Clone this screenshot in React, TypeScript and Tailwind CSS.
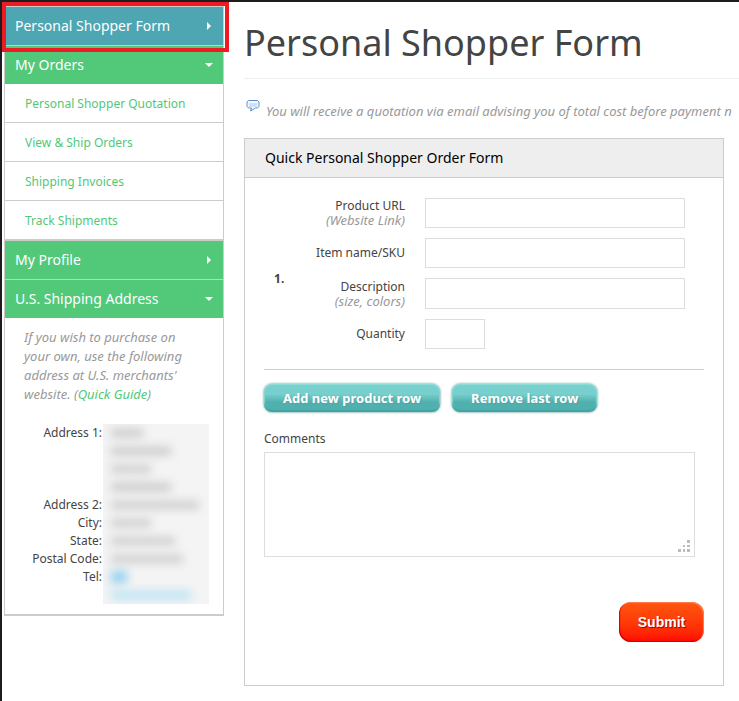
import { useState } from "react";

const orderLinks = [
  "Personal Shopper Quotation",
  "View & Ship Orders",
  "Shipping Invoices",
  "Track Shipments",
];

const addressLabels = [
  { label: "Address 1:", className: "h-[72px]" },
  { label: "Address 2:", className: "h-[18px]" },
  { label: "City:", className: "h-[18px]" },
  { label: "State:", className: "h-[18px]" },
  { label: "Postal Code:", className: "h-[18px]" },
  { label: "Tel:", className: "h-[36px]" },
];

// the customer's own address is hidden behind blurred bars
const hiddenLines = [
  "w-8 h-2 bg-[#c8c8c8]",
  "w-15 h-2 bg-[#c8c8c8]",
  "w-10 h-2 bg-[#cccccc]",
  "w-15 h-2 bg-[#c8c8c8]",
  "w-22 h-2 bg-[#cccccc]",
  "w-10 h-2 bg-[#cccccc]",
  "w-16 h-2 bg-[#cccccc]",
  "w-18 h-2 bg-[#cccccc]",
  "w-4 h-3 bg-[#8fd0f0]",
  "w-20 h-2 bg-[#b5e2f3]",
];

const fields = [
  { id: "url", label: "Product URL", hint: "(Website Link)", size: "h-[30px] w-full max-w-[260px]" },
  { id: "sku", label: "Item name/SKU", hint: "", size: "h-[30px] w-full max-w-[260px]" },
  { id: "description", label: "Description", hint: "(size, colors)", size: "h-[31px] w-full max-w-[260px]" },
  { id: "quantity", label: "Quantity", hint: "", size: "h-[30px] w-[60px]" },
];

function ArrowRight() {
  return (
    <svg width="8" height="8" viewBox="0 0 8 8" fill="white">
      <path d="M2 0v8l4-4z" />
    </svg>
  );
}

function ArrowDown() {
  return (
    <svg width="8" height="8" viewBox="0 0 8 8" fill="white">
      <path d="M0 2h8L4 6z" />
    </svg>
  );
}

function Bubble() {
  return (
    <svg width="14" height="12" viewBox="0 0 14 12" className="shrink-0">
      <path
        d="M2.500 .5h9l1.500 1.500v4.500l-1.500 1.500H9.500L4.500 11l1-3H2.500L1 6.500V2z"
        fill="#f3f8ff"
        stroke="#5f8fc9"
        strokeLinejoin="round"
      />
      <path d="M3 3h8v4H3z" fill="#cfe0f8" />
    </svg>
  );
}

function TealButton({ children, onClick }: { children: string; onClick: () => void }) {
  return (
    <button
      type="button"
      onClick={onClick}
      className="h-7 px-[19px] rounded-lg text-[13px] leading-7 font-bold text-white whitespace-nowrap bg-linear-to-b from-[#78d0ce] from-35% to-[#50b0ae] to-65% [text-shadow:1px_1px_1px_#57a5a3] shadow-[inset_0_-2px_1px_#43a2a4,inset_0_0_1px_1px_#8fdcd6,0_0_2px_1px_#a5c8c6]"
    >
      {children}
    </button>
  );
}

function Sidebar() {
  return (
    <aside className="w-[220px] shrink-0 border border-b-2 border-[#ccc]">
      <nav>
        <div className="relative border-b border-[#ccc]">
          <a href="#form" className="flex h-[38px] items-center justify-between bg-[#4da6b2] px-[10px] text-sm text-white">
            Personal Shopper Form
            <ArrowRight />
          </a>
          {/* Highlight frame */}
          <div className="pointer-events-none absolute -left-[3px] -right-[6px] -top-[5px] -bottom-[7px] border-4 border-[#ed1c24]" />
        </div>
        <a href="#orders" className="flex h-[38px] items-center justify-between bg-[#52c879] px-[10px] text-sm text-white">
          My Orders
          <ArrowDown />
        </a>
        <ul>
          {orderLinks.map((link) => (
            <li key={link} className="border-b border-[#ccc]">
              <a href="#orders" className="flex h-[38px] items-center pt-[2px] pl-5 text-xs text-[#52c879]">
                {link}
              </a>
            </li>
          ))}
        </ul>
        <a href="#profile" className="flex h-10 items-center justify-between border-y border-[#ccc] bg-[#52c879] px-[10px] text-sm text-white">
          My Profile
          <ArrowRight />
        </a>
        <a href="#address" className="flex h-[38px] items-center justify-between bg-[#52c879] px-[10px] text-sm text-white">
          U.S. Shipping Address
          <ArrowDown />
        </a>
      </nav>

      <div className="px-[19px] pt-[10px] text-[13px] leading-[19px] italic whitespace-nowrap text-[#999]">
        <p>
          If you wish to purchase on
          <br />
          your own, use the following
          <br />
          address at U.S. merchants'
          <br />
          website. (
          <a href="#guide" className="text-[#52c879]">
            Quick Guide
          </a>
          )
        </p>
      </div>

      {/* Address */}
      <div className="flex pt-5 pr-[14px] pb-[10px]">
        <div className="w-[98px] pr-px text-right text-xs leading-[18px] text-[#444]">
          {addressLabels.map((row) => (
            <div key={row.label} className={row.className}>
              {row.label}
            </div>
          ))}
        </div>
        <div className="flex-1 overflow-hidden bg-[#f4f4f4] pl-2">
          {hiddenLines.map((line, i) => (
            <div key={i} className="flex h-[18px] items-center">
              <div className={`blur-[5px] ${line}`} />
            </div>
          ))}
        </div>
      </div>
    </aside>
  );
}

export default function App() {
  const [rows, setRows] = useState(1);

  return (
    <div className="flex min-h-screen gap-5 overflow-hidden border-l-2 border-t-2 border-[#1f1c1d] bg-white pt-1 pl-[2px] font-['Noto_Sans',sans-serif]">
      <div>
        <Sidebar />
      </div>

      <main className="min-w-0 flex-1">
        <h1 className="h-[73px] border-b border-[#eee] pt-[10px] text-4xl leading-[54px] whitespace-nowrap text-[#444]">
          Personal Shopper Form
        </h1>

        <div className="flex h-[59px] gap-[6px] pt-[21px] pl-[2px]">
          <Bubble />
          <p className="pt-[2px] text-[13px] leading-[18px] italic whitespace-nowrap text-[#999]">
            You will receive a quotation via email advising you of total cost before payment n
          </p>
        </div>

        <form className="mr-[15px] border border-[#ccc]" onSubmit={(e) => e.preventDefault()}>
          <h2 className="h-[39px] border-b border-[#ccc] bg-[#eee] pl-5 text-sm leading-[38px] text-black">
            Quick Personal Shopper Order Form
          </h2>

          <div className="px-[19px] pt-5 pb-[43px]">
            {Array.from({ length: rows }, (_, row) => (
              <div key={row} className="flex items-center border-b border-[#ccc] pb-5">
                <div className="w-[30px] pt-[10px] pl-[10px] text-xs font-bold text-[#444]">{row + 1}.</div>
                <div className="flex flex-1 flex-col gap-[10px]">
                  {fields.map((field) => (
                    <div key={field.id} className="flex items-center gap-5">
                      <label
                        htmlFor={`${field.id}-${row}`}
                        className="w-[111px] shrink-0 text-right text-xs leading-[14px] text-[#444]"
                      >
                        {field.label}
                        {field.hint && (
                          <em className="block text-[13px] leading-[14px] text-[#999]">{field.hint}</em>
                        )}
                      </label>
                      <input
                        id={`${field.id}-${row}`}
                        type="text"
                        className={`border border-[#ddd] px-2 text-xs ${field.size}`}
                      />
                    </div>
                  ))}
                </div>
              </div>
            ))}

            <div className="flex gap-3 pt-[14px]">
              <TealButton onClick={() => setRows(rows + 1)}>Add new product row</TealButton>
              <TealButton onClick={() => setRows(Math.max(1, rows - 1))}>Remove last row</TealButton>
            </div>

            <label htmlFor="comments" className="block pt-[18px] text-xs leading-[18px] text-[#444]">
              Comments
            </label>
            <div className="relative mt-1 mr-[9px]">
              <textarea
                id="comments"
                className="block h-[105px] w-full resize-none border border-[#ddd] p-2 text-xs"
              />
              <svg width="12" height="12" viewBox="0 0 12 12" fill="#bbb" className="pointer-events-none absolute right-[5px] bottom-[5px]">
                <path d="M9 0h3v3H9zM5 5h2v2H5zM9 5h3v2H9zM0 9h3v3H0zM5 9h2v3H5zM9 9h3v3H9z" />
              </svg>
            </div>

            <div className="flex justify-end pt-[45px]">
              <button
                type="submit"
                className="h-10 w-[85px] rounded-xl bg-linear-to-b from-[#ff5510] to-[#ff0000] font-['Liberation_Sans',sans-serif] text-sm font-bold text-white [text-shadow:1px_1px_1px_#900] shadow-[inset_1px_-1px_1px_#d00000,inset_-1px_1px_1px_#ff8050]"
              >
                Submit
              </button>
            </div>
          </div>
        </form>
      </main>
    </div>
  );
}
